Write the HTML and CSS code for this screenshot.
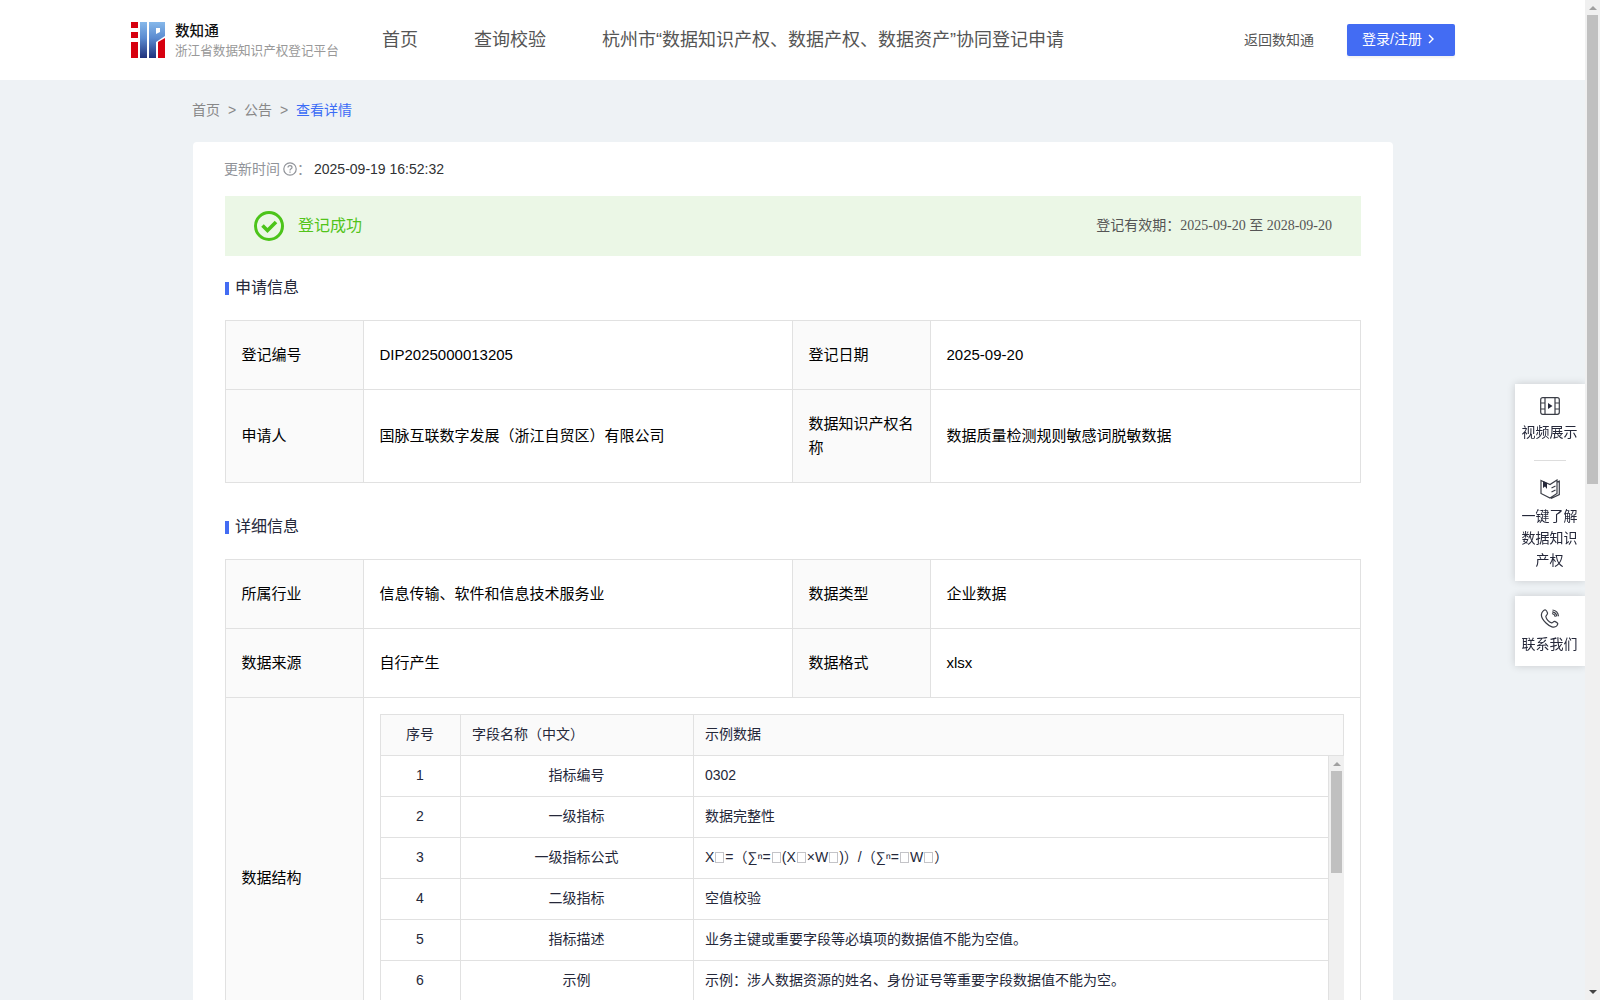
FILE: index.html
```html
<!DOCTYPE html>
<html lang="zh-CN">
<head>
<meta charset="utf-8">
<title>数知通 - 查看详情</title>
<link rel="stylesheet" href="styles.css">
</head>
<body>
<div class="page">
  <header class="header">
    <svg class="logo" width="34" height="36" viewBox="0 0 34 36">
      <defs><linearGradient id="blue" x1="0" y1="0" x2="0" y2="1"><stop offset="0" stop-color="#86b8ea"/><stop offset=".45" stop-color="#5b8bd0"/><stop offset="1" stop-color="#20327c"/></linearGradient></defs>
      <path fill="#d7000f" d="M0 0h7v6H0zM0 10h7v6H0zM0 20h7v16H0zM27 20l7-4v20h-7z"/>
      <path fill="url(#blue)" fill-rule="evenodd" d="M9 0h7v36H9zM18 0h16v14l-9 6v16h-7zM25 6v6l4-2V6z"/>
    </svg>
    <div class="brand"><div class="brand-name">数知通</div><div class="brand-sub">浙江省数据知识产权登记平台</div></div>
    <nav class="nav"><a>首页</a><a>查询校验</a><a>杭州市“数据知识产权、数据产权、数据资产”协同登记申请</a></nav>
    <a class="back">返回数知通</a>
    <button class="login">登录/注册<svg width="6" height="10" viewBox="0 0 6 10"><path d="M1 1l4 4-4 4" fill="none" stroke="#fff" stroke-width="1.4"/></svg></button>
  </header>
  <div class="crumbs"><span>首页</span><i>&gt;</i><span>公告</span><i>&gt;</i><b>查看详情</b></div>
  <main class="card">
    <div class="updated"><span>更新时间</span><svg width="14" height="14" viewBox="0 0 14 14" fill="none" stroke="#909399"><circle cx="7" cy="7" r="6.2" stroke-width="1.2"/><path d="M5 5.6c0-2.6 4-2.4 4-.2C9 6.8 7 6.700 7 8.400M7 9.500v1.200" stroke-width="1.200"/></svg><span>：</span><time>2025-09-19 16:52:32</time></div>
    <div class="banner">
      <svg width="30" height="30" viewBox="0 0 30 30" fill="none" stroke="#4cc41a"><circle cx="15" cy="15" r="13.500" stroke-width="3"/><path d="M8.500 14.500l5 5 8.500-8.500" stroke-width="3.600"/></svg>
      <strong>登记成功</strong>
      <span class="valid">登记有效期：<em>2025-09-20</em> 至 <em>2028-09-20</em></span>
    </div>
    <h2>申请信息</h2>
    <table class="info">
      <colgroup><col class="c-label"><col class="c-first"><col class="c-label"><col></colgroup>
      <tr class="short"><th>登记编号</th><td>DIP2025000013205</td><th>登记日期</th><td>2025-09-20</td></tr>
      <tr class="tall"><th>申请人</th><td>国脉互联数字发展（浙江自贸区）有限公司</td><th>数据知识产权名称</th><td>数据质量检测规则敏感词脱敏数据</td></tr>
    </table>
    <h2 class="second">详细信息</h2>
    <table class="info">
      <colgroup><col class="c-label"><col class="c-first"><col class="c-label"><col></colgroup>
      <tr class="short"><th>所属行业</th><td>信息传输、软件和信息技术服务业</td><th>数据类型</th><td>企业数据</td></tr>
      <tr class="short"><th>数据来源</th><td>自行产生</td><th>数据格式</th><td>xlsx</td></tr>
      <tr class="structure"><th>数据结构</th><td colspan="3">
        <div class="grid">
          <div class="row head"><span>序号</span><span>字段名称（中文）</span><span>示例数据</span></div>
          <div class="grid-body">
            <div class="rows">
              <div class="row"><span>1</span><span>指标编号</span><span>0302</span></div>
              <div class="row"><span>2</span><span>一级指标</span><span>数据完整性</span></div>
              <div class="row"><span>3</span><span>一级指标公式</span><span>X<i class="sub"></i>=（∑ⁿ=<i class="sub"></i>(X<i class="sub"></i>×W<i class="sub"></i>)）/（∑ⁿ=<i class="sub"></i>W<i class="sub"></i>）</span></div>
              <div class="row"><span>4</span><span>二级指标</span><span>空值校验</span></div>
              <div class="row"><span>5</span><span>指标描述</span><span>业务主键或重要字段等必填项的数据值不能为空值。</span></div>
              <div class="row"><span>6</span><span>示例</span><span>示例：涉人数据资源的姓名、身份证号等重要字段数据值不能为空。</span></div>
            </div>
            <div class="bar"><div class="up"></div><div class="thumb"></div></div>
          </div>
        </div>
      </td></tr>
    </table>
  </main>
</div>
<aside class="tools">
  <div class="tool-box">
    <svg width="20" height="18" viewBox="0 0 20 18" fill="none" stroke="#3a3d46" stroke-width="1.200"><rect x=".7" y=".7" width="18.600" height="16.600" rx="2"/><path d="M5 1v16M15 1v16M1 6h4M1 12h4M15 6h4M15 12h4"/><path d="M8 6l4.500 3L8 12z" fill="#25283a" stroke="none"/></svg>
    <p>视频展示</p>
    <hr>
    <svg width="20" height="20" viewBox="0 0 20 20" fill="none" stroke="#3a3d46" stroke-width="1.200"><path d="M1 1.500l9 4 7-4.500v13.500L10 19l-9-4.500zM17 3l2.300-.8V15.500L11 19.500M11.500 9l4-2M11.500 13l4-2"/><path d="M3 2v7l2-1.500L7 10V4z" fill="#25283a" stroke="none"/></svg>
    <p>一键了解数据知识产权</p>
  </div>
  <div class="tool-box contact">
    <svg width="20" height="20" viewBox="0 0 20 20" fill="none" stroke="#3a3d46" stroke-width="1.200"><path d="M3 2.200C5-.2 6.500 1 7.500 4c.4 1.500-1.500 2.300-1.700 3.500.4 2.500 3 5.500 5.800 6.300 1.300.2 1.700-1.700 3.200-1.400 3.500 1.400 3.700 2.600 1.700 4.700-2.200 2-6.500.9-10.500-3.100S-.2 5.500 3 2.200zM12 4.500c2 .4 3 1.500 3.400 3.300M12.500 1c3.500.5 5.600 2.800 6 6.200M12.200 2.800c2.700.4 4.200 2 4.600 4.600"/></svg>
    <p>联系我们</p>
  </div>
</aside>
<div class="bar page-bar"><div class="up"></div><div class="thumb"></div><div class="down"></div></div>
</body>
</html>
```
FILE: styles.css
```css
* { box-sizing: border-box; }
body { margin: 0; height: 1000px; overflow: hidden; display: flex; background: #eef2f5; color: #25283a; font: 14px/20px "Liberation Sans", "Noto Sans CJK SC", sans-serif; }
.page { width: 1585px; height: 1000px; overflow: hidden; flex: none; }
i, em { font-style: normal; }
p { margin: 0; }

.header { height: 80px; background: #fff; display: flex; align-items: center; padding: 0 130px 0 131px; color: #555; }
.logo { flex: none; }
.brand { margin-left: 10px; width: 207px; padding-top: 1px; }
.brand-name { font-size: 14.6px; font-weight: 500; color: #111; }
.brand-sub { font-size: 12.6px; color: #999; white-space: nowrap; }
.nav { display: flex; gap: 56px; font-size: 18px; white-space: nowrap; line-height: 24px; }
.back { margin-left: auto; }
.login { margin-left: 33px; width: 108px; height: 32px; padding: 0 0 2px 15px; border: 0; border-radius: 2px; background: #436cf3; color: #fff; font: inherit; display: flex; align-items: center; gap: 6px; box-shadow: 0 2px 2px rgba(0,0,0,.05); white-space: nowrap; }

.crumbs { height: 62px; padding: 20px 0 0 192px; display: flex; color: #888; }
.crumbs i { width: 24px; text-align: center; }
.crumbs b { font-weight: 400; color: #3b6cf6; }

.card { width: 1200px; height: 1100px; margin-left: 193px; padding: 17px 32px; background: #fff; border-radius: 4px; }
.updated { display: flex; align-items: center; color: #909399; height: 20px; }
.updated > span:first-child { margin-left: -1px; }
.updated svg { margin-left: 3px; }
.updated time { color: #303133; margin-left: 3px; }
.banner { margin-top: 17px; height: 60px; background: #ebf7e6; display: flex; align-items: center; padding: 0 29px; }
.banner strong { margin-left: 14px; font-size: 16px; font-weight: 400; color: #52c41a; }
.valid { margin-left: auto; color: #555; font-family: "Liberation Serif", "Noto Sans CJK SC", serif; }
h2 { margin: 20px 0; height: 24px; font-size: 16px; font-weight: 400; line-height: 24px; display: flex; align-items: center; gap: 6px; }
h2::before { content: ""; width: 4px; height: 13px; background: #436cf3; margin-top: 1px; }
h2.second { margin-top: 32px; }

.info { width: 1136px; border-collapse: collapse; table-layout: fixed; color: #000; font-size: 15px; line-height: 24px; }
.info th, .info td { border: 1px solid #e1e1e1; padding: 0 16px 1px 15.500px; text-align: left; font-weight: 400; }
.info th { background: #fafafa; }
.c-label { width: 138px; }
.c-first { width: 429px; }
.short { height: 69px; }
.tall { height: 93px; }
.structure { height: 362px; }
.info .structure td { vertical-align: top; padding: 16px 16px 0; }

.grid { width: 964px; height: 330px; overflow: hidden; color: #25283a; font-size: 14px; line-height: 20px; }
.row { display: flex; height: 41px; border-left: 1px solid #e1e1e1; }
.row span { border: solid #e1e1e1; border-width: 0 1px 1px 0; padding: 9px 1px 0 0; text-align: center; }
.row span:nth-child(1) { width: 80px; }
.row span:nth-child(2) { width: 233px; }
.row span:nth-child(3) { flex: 1; padding-left: 11px; text-align: left; }
.row.head { height: 42px; border-top: 1px solid #e1e1e1; background: #fafafa; }
.row.head span:nth-child(2) { padding-left: 11px; text-align: left; }
.grid-body { display: flex; }
.rows { flex: 1; }
.sub { display: inline-block; width: 9px; height: 11px; margin: 0 1px; border: 1px solid #c4c4c8; vertical-align: -1px; }

.bar { width: 15px; background: #f0f0f0; display: flex; flex-direction: column; align-items: center; flex: none; }
.grid .bar { height: 290px; }
.up { margin: 6px 0 5px; border: solid transparent; border-width: 0 4px 4px; border-bottom-color: #a0a0a0; }
.thumb { width: 11px; height: 102px; background: #c0c0c0; }
.page-bar .thumb { height: 469px; }
.down { margin: auto 0 6px; border: solid transparent; border-width: 4px 4px 0; border-top-color: #444; }

.tools { position: fixed; right: 15px; top: 384px; width: 70px; clip-path: inset(-20px 0 -20px -20px); text-align: center; line-height: 22px; }
.tool-box { height: 197px; padding: 13px 7px 0 6px; background: #fff; box-shadow: 0 0 8px rgba(0,0,0,.16); }
.tool-box svg { display: block; margin: 0 auto; }
.tool-box p { margin-top: 6px; }
.tool-box hr { width: 32px; height: 1px; border: 0; background: #ddd; margin: 17px auto 18px; }
.tool-box.contact { height: 70px; margin-top: 15px; padding-top: 13px; }
.contact p { margin-top: 4px; }
```
